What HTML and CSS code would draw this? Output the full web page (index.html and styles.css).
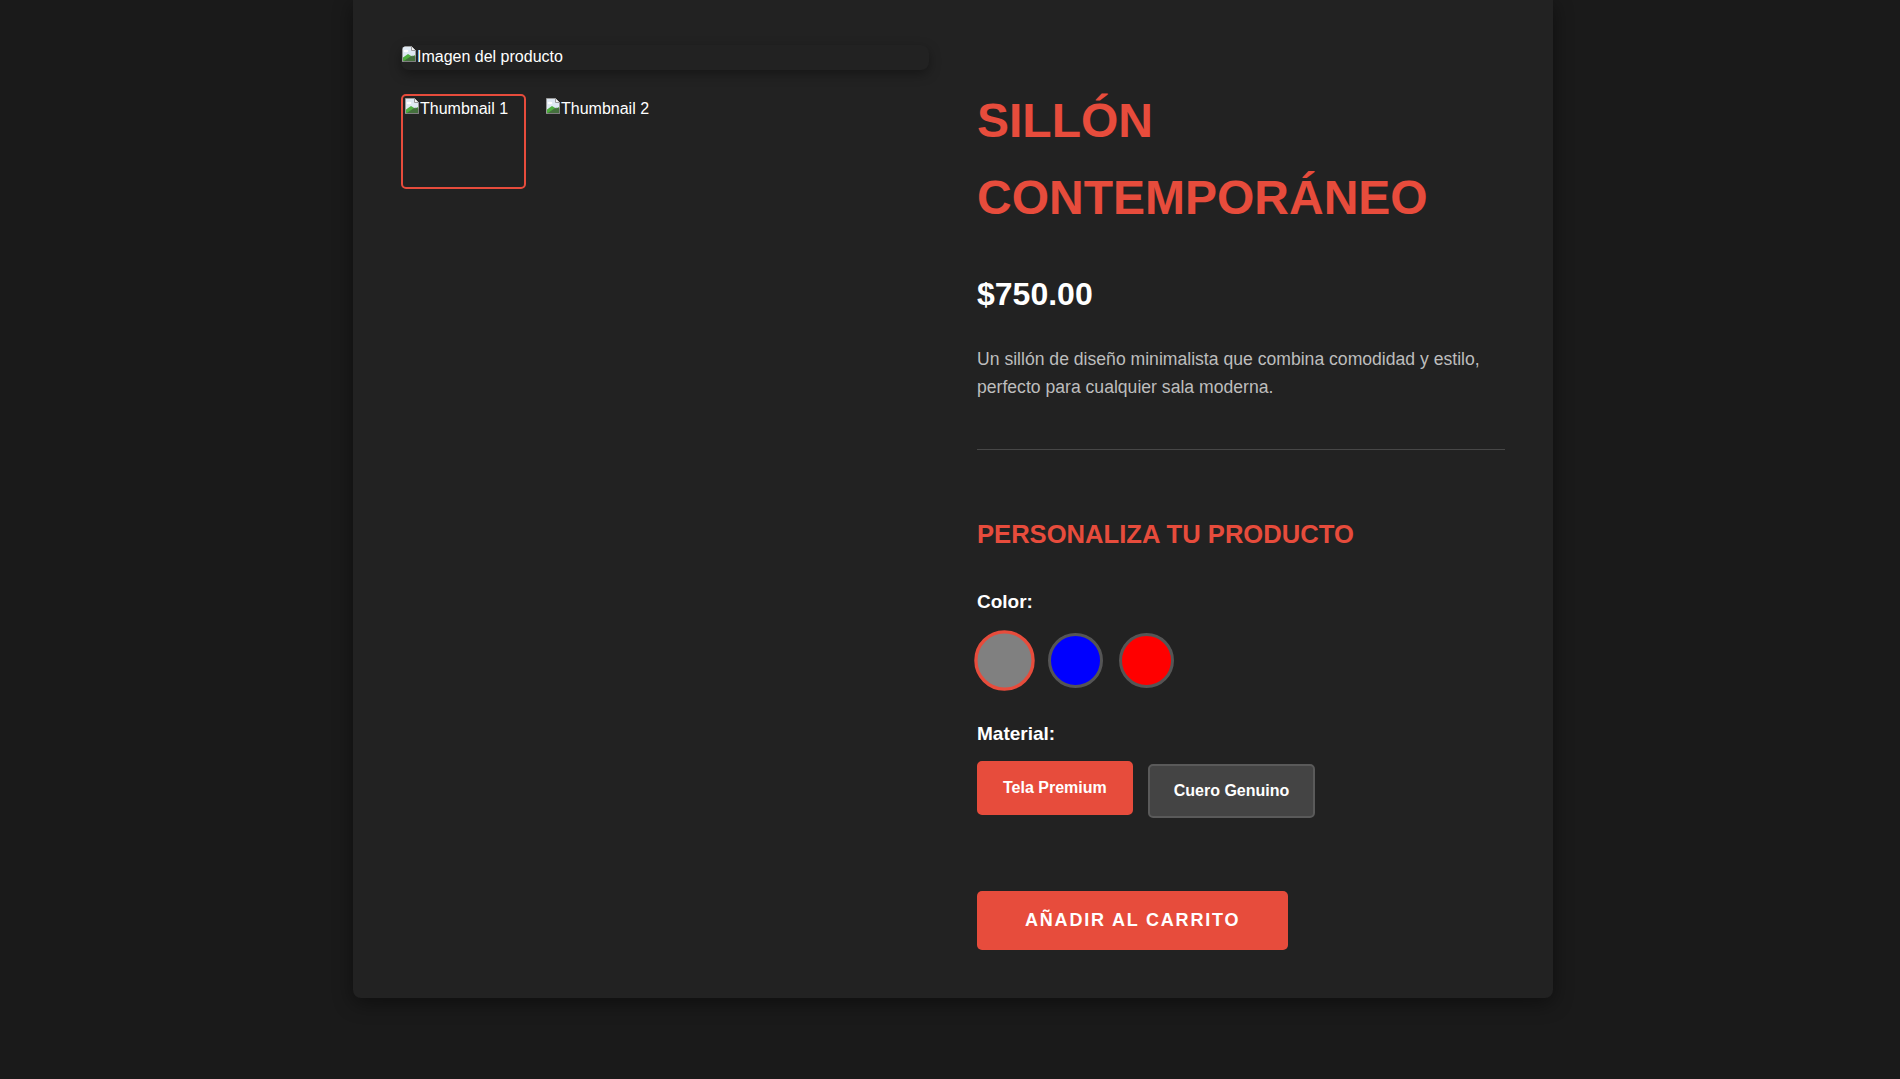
FILE: index.html
```html
<!DOCTYPE html>
<html lang="es">
<head>
<meta charset="utf-8">
<title>Sillón Contemporáneo</title>
<link rel="stylesheet" href="styles.css">
</head>
<body>
<div class="page">
  <main class="card">
    <div class="product">
      <section class="gallery">
        <div class="main-image">
          <span class="broken">
            <svg class="broken-icon" width="16" height="16" viewBox="0 0 16 16" aria-hidden="true">
              <path d="M1.5 0.5h9l4 4v11h-13z" fill="#dfe9f3" stroke="#9a9a9a"/>
              <path d="M10.5 0.5v4h4" fill="#f4f4f4" stroke="#9a9a9a"/>
              <ellipse cx="5" cy="5" rx="2.4" ry="1.3" fill="#ffffff"/>
              <path d="M2 11.5l5-3.5 4 2.5 3-1.5v6H2z" fill="#4fae3f"/>
              <path d="M2 15.5l9-6 3.5 1v5z" fill="#3c3c3c" opacity="0.55"/>
            </svg>Imagen del producto
          </span>
        </div>
        <div class="thumbs">
          <div class="thumb thumb-active">
            <span class="broken">
              <svg class="broken-icon" width="16" height="16" viewBox="0 0 16 16" aria-hidden="true">
                <path d="M1.5 0.5h9l4 4v11h-13z" fill="#dfe9f3" stroke="#9a9a9a"/>
                <path d="M10.5 0.5v4h4" fill="#f4f4f4" stroke="#9a9a9a"/>
                <ellipse cx="5" cy="5" rx="2.4" ry="1.3" fill="#ffffff"/>
                <path d="M2 11.5l5-3.5 4 2.5 3-1.5v6H2z" fill="#4fae3f"/>
                <path d="M2 15.5l9-6 3.5 1v5z" fill="#3c3c3c" opacity="0.55"/>
              </svg>Thumbnail 1
            </span>
          </div>
          <div class="thumb">
            <span class="broken">
              <svg class="broken-icon" width="16" height="16" viewBox="0 0 16 16" aria-hidden="true">
                <path d="M1.5 0.5h9l4 4v11h-13z" fill="#dfe9f3" stroke="#9a9a9a"/>
                <path d="M10.5 0.5v4h4" fill="#f4f4f4" stroke="#9a9a9a"/>
                <ellipse cx="5" cy="5" rx="2.4" ry="1.3" fill="#ffffff"/>
                <path d="M2 11.5l5-3.5 4 2.5 3-1.5v6H2z" fill="#4fae3f"/>
                <path d="M2 15.5l9-6 3.5 1v5z" fill="#3c3c3c" opacity="0.55"/>
              </svg>Thumbnail 2
            </span>
          </div>
        </div>
      </section>

      <section class="info">
        <h1 class="title">SILLÓN CONTEMPORÁNEO</h1>
        <div class="price">$750.00</div>
        <p class="desc">Un sillón de diseño minimalista que combina comodidad y estilo, perfecto para cualquier sala moderna.</p>
        <hr class="divider">
        <h2 class="subtitle">PERSONALIZA TU PRODUCTO</h2>

        <div class="option">
          <div class="option-label">Color:</div>
          <div class="swatches">
            <span class="swatch swatch-gray swatch-active"></span>
            <span class="swatch swatch-blue"></span>
            <span class="swatch swatch-red"></span>
          </div>
        </div>

        <div class="option option-material">
          <div class="option-label">Material:</div>
          <div class="materials">
            <button class="material material-active">Tela Premium</button>
            <button class="material">Cuero Genuino</button>
          </div>
        </div>

        <button class="cart">AÑADIR AL CARRITO</button>
      </section>
    </div>
  </main>
</div>
</body>
</html>
```
FILE: styles.css
```css
* { box-sizing: border-box; }

html, body {
  margin: 0;
  padding: 0;
  background: #1a1a1a;
  font-family: "Liberation Sans", Arial, sans-serif;
  color: #f0f0f0;
}

.page {
  padding-left: 6px;
  min-height: 1079px;
}

.card {
  width: 1200px;
  margin: 0 auto;
  background: #222222;
  padding: 45px 48px 48px;
  border-radius: 0 0 8px 8px;
  box-shadow: 0 5px 20px rgba(0, 0, 0, 0.45);
}

.product {
  display: grid;
  grid-template-columns: 1fr 1fr;
  gap: 48px;
  align-items: start;
}

/* gallery */
.main-image {
  width: 100%;
  height: 25px;
  border-radius: 8px;
  background: #222;
  box-shadow: 0 4px 12px rgba(0, 0, 0, 0.35);
  overflow: hidden;
}

.broken {
  display: inline-flex;
  align-items: flex-start;
  font-size: 16px;
  line-height: 1.15;
  color: #ffffff;
  padding-top: 3px;
}

.broken-icon {
  flex: none;
  margin-top: -2px;
}

.thumbs {
  display: flex;
  gap: 16px;
  margin-top: 24px;
}

.thumb {
  width: 125px;
  height: 95px;
  border: 2px solid transparent;
  border-radius: 5px;
  padding: 1px;
}

.thumb-active {
  border-color: #e74c3c;
}

/* info */
.title {
  margin: 38px 0 0;
  font-size: 48px;
  line-height: 1.6;
  font-weight: 700;
  color: #e74c3c;
}

.price {
  margin-top: 32px;
  font-size: 32px;
  line-height: 1.6;
  font-weight: 700;
  color: #ffffff;
}

.desc {
  margin: 25px 0 0;
  font-size: 17.6px;
  line-height: 1.6;
  color: #bdbdbd;
}

.divider {
  margin: 48px 0 0;
  border: 0;
  height: 1px;
  background: #474747;
}

.subtitle {
  margin: 64px 0 0;
  font-size: 25.6px;
  line-height: 1.6;
  font-weight: 700;
  color: #e74c3c;
}

.option {
  margin-top: 32px;
}

.option-material {
  margin-top: 31px;
}

.option-label {
  font-size: 19px;
  line-height: 1.6;
  font-weight: 700;
  color: #ffffff;
}

.swatches {
  display: flex;
  gap: 16px;
  margin-top: 16px;
}

.swatch {
  width: 55px;
  height: 55px;
  border-radius: 50%;
  border: 3px solid #555555;
}

.swatch-gray { background: #808080; }
.swatch-blue { background: #0000ff; }
.swatch-red { background: #ff0000; }

.swatch-active {
  border-color: #e74c3c;
  transform: scale(1.1);
}

.materials {
  display: flex;
  gap: 15px;
  margin-top: 14px;
}

.material {
  font-family: "Liberation Sans", Arial, sans-serif;
  font-size: 16px;
  font-weight: 700;
  line-height: normal;
  color: #ffffff;
  background: #444444;
  border: 2px solid #5a5a5a;
  border-radius: 5px;
  padding: 16px 24px;
}

.material-active {
  background: #e74c3c;
  border-color: #e74c3c;
  transform: translateY(-3px);
}

.cart {
  display: block;
  margin-top: 73px;
  font-family: "Liberation Sans", Arial, sans-serif;
  font-size: 18px;
  font-weight: 700;
  letter-spacing: 1.8px;
  line-height: normal;
  color: #ffffff;
  background: #e74c3c;
  border: 0;
  border-radius: 5px;
  padding: 19px 48px;
}
```
